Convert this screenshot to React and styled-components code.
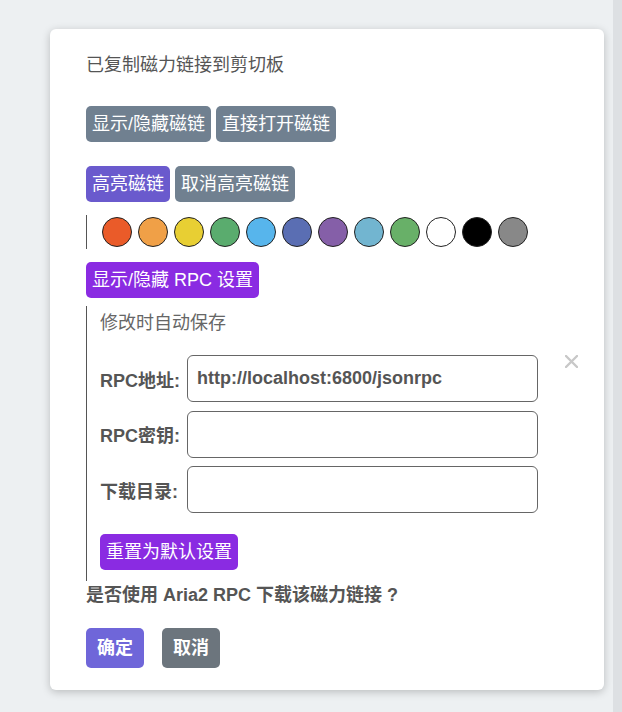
import React from "react";
import styled, { createGlobalStyle } from "styled-components";

const Global = createGlobalStyle`
  html, body { margin: 0; padding: 0; }
  body {
    background: #edf0f2;
    font-family: "Liberation Sans", Arial, "Noto Sans CJK SC", sans-serif;
  }
`;

const Page = styled.div`
  display: flex;
  min-height: 712px;
`;

const Main = styled.div`
  flex: 1;
  padding: 29px 0 0 50px;
`;

const Strip = styled.div`
  width: 9px;
  background: #dde0e3;
`;

const Panel = styled.div`
  position: relative;
  width: 554px;
  box-sizing: border-box;
  background: #fff;
  border-radius: 6px;
  box-shadow: 0 2px 8px rgba(0, 0, 0, 0.22);
  padding: 24px 36px 22px 36px;
  display: flex;
  flex-direction: column;
  align-items: flex-start;
`;

const Title = styled.div`
  font-size: 18px;
  line-height: 24px;
  color: #555;
`;

const ButtonRow = styled.div`
  display: flex;
  gap: ${(p) => p.$gap || 5}px;
  margin-top: ${(p) => p.$top || 0}px;
`;

const Btn = styled.button`
  font-family: inherit;
  font-size: 18px;
  line-height: 24px;
  font-weight: ${(p) => (p.$bold ? "bold" : "normal")};
  color: #fff;
  border: none;
  border-radius: 5px;
  padding: ${(p) => (p.$big ? "8px 11px" : "6px 6px")};
  background: ${(p) => p.$bg};
  cursor: pointer;
  white-space: nowrap;
`;

const ColorBar = styled.div`
  display: flex;
  gap: 6px;
  align-items: center;
  border-left: 1px solid #555;
  padding: 2px 0 2px 15px;
  margin-top: 13px;
`;

const Dot = styled.span`
  width: 30px;
  height: 30px;
  box-sizing: border-box;
  border-radius: 50%;
  border: 1px solid #222;
  background: ${(p) => p.$c};
`;

const Section = styled.div`
  border-left: 1px solid #555;
  padding: 5px 0 11px 13px;
  margin-top: 8px;
  display: flex;
  flex-direction: column;
  align-items: flex-start;
`;

const Note = styled.div`
  font-size: 18px;
  line-height: 24px;
  color: #666;
`;

const Form = styled.div`
  display: grid;
  grid-template-columns: 87px 351px;
  row-gap: 8.5px;
  margin-top: 20px;
  align-items: center;
`;

const Label = styled.label`
  font-size: 18px;
  font-weight: bold;
  color: #555;
  white-space: nowrap;
`;

const Input = styled.input`
  box-sizing: border-box;
  width: 351px;
  height: 47px;
  border: 1px solid #666;
  border-radius: 6px;
  padding: 0 9px;
  font-family: inherit;
  font-size: 18px;
  font-weight: bold;
  color: #555;
  outline: none;
`;

const Question = styled.div`
  font-size: 18px;
  line-height: 24px;
  font-weight: bold;
  color: #555;
  margin-top: 2px;
`;

const Close = styled.svg`
  position: absolute;
  left: 515px;
  top: 326px;
`;

const colors = [
  "#ea5b29",
  "#f0a047",
  "#e8cf33",
  "#5aac6e",
  "#57b5ec",
  "#5a6eb3",
  "#855fa8",
  "#72b5d0",
  "#68b068",
  "#ffffff",
  "#000000",
  "#888888",
];

export default function App() {
  return (
    <>
      <Global />
      <Page>
        <Main>
          <Panel>
            <Title>已复制磁力链接到剪切板</Title>
            <ButtonRow $top={29}>
              <Btn $bg="#708090">显示/隐藏磁链</Btn>
              <Btn $bg="#708090">直接打开磁链</Btn>
            </ButtonRow>
            <ButtonRow $top={24}>
              <Btn $bg="#6a5acd">高亮磁链</Btn>
              <Btn $bg="#708090">取消高亮磁链</Btn>
            </ButtonRow>
            <ColorBar>
              {colors.map((c) => (
                <Dot key={c} $c={c} />
              ))}
            </ColorBar>
            <ButtonRow $top={13}>
              <Btn $bg="#8a2be2">显示/隐藏 RPC 设置</Btn>
            </ButtonRow>
            <Section>
              <Note>修改时自动保存</Note>
              <Form>
                <Label>RPC地址:</Label>
                <Input defaultValue="http://localhost:6800/jsonrpc" />
                <Label>RPC密钥:</Label>
                <Input defaultValue="" />
                <Label>下载目录:</Label>
                <Input defaultValue="" />
              </Form>
              <ButtonRow $top={21}>
                <Btn $bg="#8a2be2">重置为默认设置</Btn>
              </ButtonRow>
            </Section>
            <Question>是否使用 Aria2 RPC 下载该磁力链接 ?</Question>
            <ButtonRow $top={21} $gap={18}>
              <Btn $bg="#6f66d9" $big $bold>确定</Btn>
              <Btn $bg="#6c757d" $big $bold>取消</Btn>
            </ButtonRow>
            <Close width="13" height="13" viewBox="0 0 13 13">
              <path d="M1 1 L12 12 M12 1 L1 12" stroke="#c8c8c8" strokeWidth="2.4" strokeLinecap="round" />
            </Close>
          </Panel>
        </Main>
        <Strip />
      </Page>
    </>
  );
}
